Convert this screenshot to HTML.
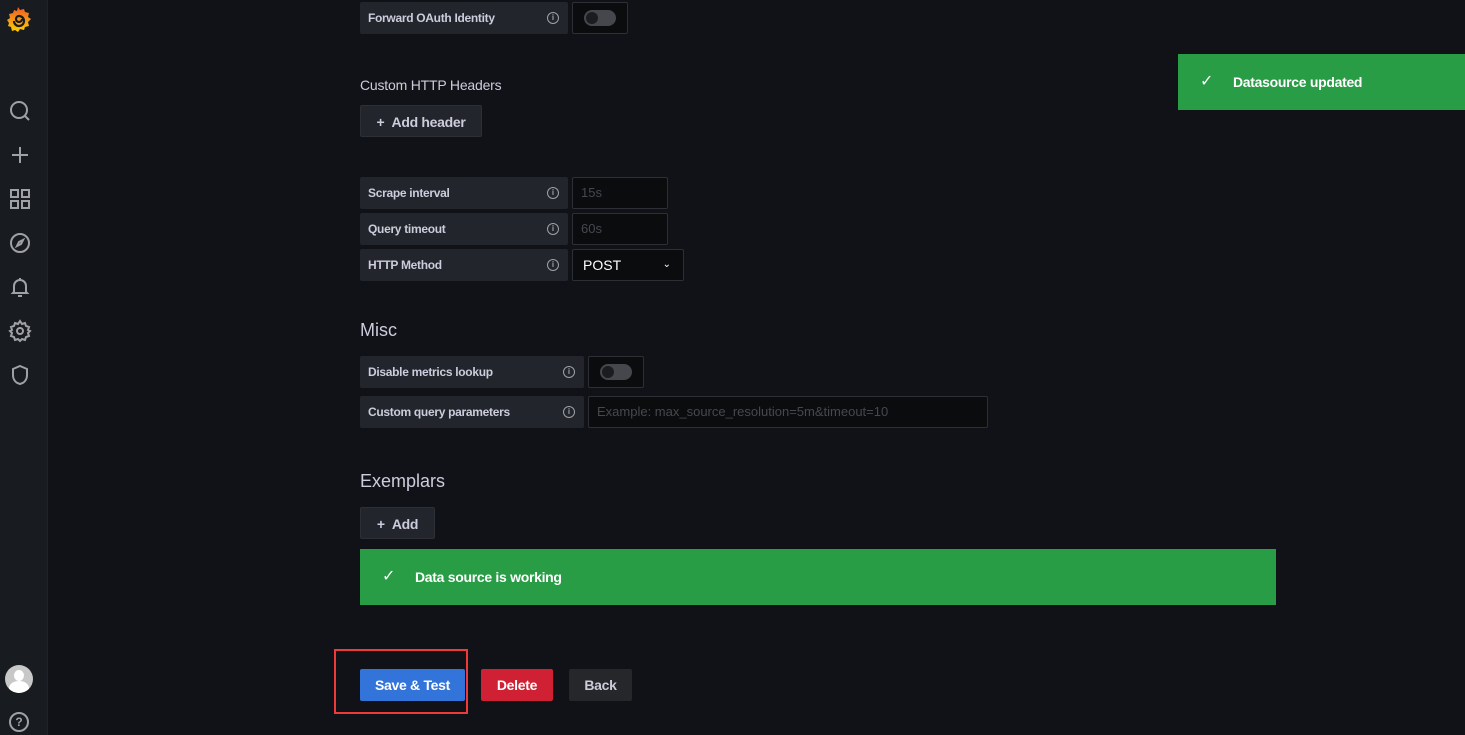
<!DOCTYPE html>
<html><head><meta charset="utf-8"><style>
*{box-sizing:border-box;margin:0;padding:0}
body{width:1465px;height:735px;background:#111217;font-family:"Liberation Sans",sans-serif;color:#ccccdc;position:relative;overflow:hidden}
.side{position:absolute;left:0;top:0;width:48px;height:735px;background:#181b1f;border-right:1px solid #202226}
.side svg{position:absolute;left:8px}
.a{position:absolute}
.lbl{position:absolute;background:#22252b;border-radius:2px;height:32px;font-size:12px;font-weight:bold;color:#ccccdc;line-height:32px;padding-left:8px;letter-spacing:-0.3px}
.lbl i{position:absolute;right:9px;top:10px;width:12px;height:12px;border:1.3px solid #9fa1a6;border-radius:50%;font-style:normal;font-size:8px;line-height:9px;text-align:center;color:#9fa1a6;letter-spacing:0}
.inp{position:absolute;background:#0b0c0e;border:1px solid #2c2f35;border-radius:2px;height:32px;font-size:13px;line-height:30px;padding-left:8px;color:#464850}
.tog{position:absolute;width:32px;height:16px;border-radius:8px;background:#45474d}
.tog:after{content:"";position:absolute;left:2px;top:2px;width:12px;height:12px;border-radius:50%;background:#1b1c20}
.btn{position:absolute;height:32px;border-radius:2px;font-size:14px;font-weight:bold;line-height:32px;text-align:center;color:#fff;letter-spacing:-0.3px}
.h{position:absolute;font-size:18px;color:#ccccdc}
.green{position:absolute;background:#299c46;color:#fff;font-weight:bold;font-size:14px;letter-spacing:-0.3px}
</style></head><body>
<div class="side">
<svg style="top:5px;left:6px" width="26" height="28" viewBox="0 0 26 28"><defs><linearGradient id="g" x1="0" y1="1" x2="0" y2="0"><stop offset="0" stop-color="#fcd000"/><stop offset="1" stop-color="#f05a28"/></linearGradient></defs><path d="M12 2l2 3 4-1 1 3 4 1-1 4 3 2-3 3 1 4-4 1-1 3-4-1-2 3-3-2-3 1-1-4-3-1 1-3-2-3 3-2-1-4 4-1 1-3 3 1z" fill="url(#g)"/><path d="M16 14a3 3 0 11-3-3 5 5 0 11-5 5" fill="none" stroke="#181b1f" stroke-width="2.2"/></svg>
<svg style="top:99px" width="24" height="24" viewBox="0 0 24 24" fill="none" stroke="#9fa1a6" stroke-width="2"><circle cx="11" cy="11" r="8"/><path d="M17 17l4 4"/></svg>
<svg style="top:143px" width="24" height="24" viewBox="0 0 24 24" stroke="#9fa1a6" stroke-width="2"><path d="M12 4v16M4 12h16"/></svg>
<svg style="top:187px" width="24" height="24" viewBox="0 0 24 24" fill="none" stroke="#9fa1a6" stroke-width="2"><rect x="3" y="3" width="7" height="7"/><rect x="14" y="3" width="7" height="7"/><rect x="3" y="14" width="7" height="7"/><rect x="14" y="14" width="7" height="7"/></svg>
<svg style="top:231px" width="24" height="24" viewBox="0 0 24 24" fill="none" stroke="#9fa1a6" stroke-width="2"><circle cx="12" cy="12" r="9"/><path d="M15 9l-2 4-4 2 2-4z"/></svg>
<svg style="top:275px" width="24" height="24" viewBox="0 0 24 24" fill="none" stroke="#9fa1a6" stroke-width="2"><path d="M6 17V11a6 6 0 0112 0v6l1 1H5zM10 21h4M12 3v2"/></svg>
<svg style="top:319px" width="24" height="24" viewBox="0 0 24 24" fill="none" stroke="#9fa1a6" stroke-width="2"><circle cx="12" cy="12" r="3"/><path d="M12 2l2 3 3-1 1 3 3 1-1 3 2 1-2 2 1 3-3 1-1 3-3-1-2 2-2-2-3 1-1-3-3-1 1-3-2-2 2-1-1-3 3-1 1-3 3 1z"/></svg>
<svg style="top:363px" width="24" height="24" viewBox="0 0 24 24" fill="none" stroke="#9fa1a6" stroke-width="2"><path d="M12 3l7 3v6c0 5-3 8-7 9-4-1-7-4-7-9V6z"/></svg>
<div class="a" style="left:5px;top:665px;width:28px;height:28px;border-radius:50%;background:#c8c8c8;overflow:hidden"><div class="a" style="left:9px;top:5px;width:10px;height:11px;border-radius:50%;background:#fff"></div><div class="a" style="left:4px;top:16px;width:20px;height:14px;border-radius:50% 50% 0 0;background:#fff"></div></div>
<div class="a" style="left:9px;top:712px;width:20px;height:20px;border:2px solid #9fa1a6;border-radius:50%;font-size:12px;font-weight:bold;text-align:center;line-height:16px;color:#9fa1a6">?</div>
</div>

<div class="lbl" style="left:360px;top:2px;width:208px">Forward OAuth Identity<i>i</i></div>
<div class="inp" style="left:572px;top:2px;width:56px"></div><div class="tog" style="left:584px;top:10px"></div>

<div class="a" style="left:360px;top:77px;font-size:14px;letter-spacing:-0.2px">Custom HTTP Headers</div>
<div class="btn" style="left:360px;top:105px;width:122px;background:#22252b;color:#ccccdc;border:1px solid #2c2f35">+&nbsp;&nbsp;Add header</div>

<div class="lbl" style="left:360px;top:177px;width:208px">Scrape interval<i>i</i></div>
<div class="inp" style="left:572px;top:177px;width:96px">15s</div>
<div class="lbl" style="left:360px;top:213px;width:208px">Query timeout<i>i</i></div>
<div class="inp" style="left:572px;top:213px;width:96px">60s</div>
<div class="lbl" style="left:360px;top:249px;width:208px">HTTP Method<i>i</i></div>
<div class="inp" style="left:572px;top:249px;width:112px;color:#fff;font-size:14px;padding-left:10px">POST<span style="position:absolute;right:12px;font-size:10px">&#8964;</span></div>

<div class="h" style="left:360px;top:320px">Misc</div>
<div class="lbl" style="left:360px;top:356px;width:224px">Disable metrics lookup<i>i</i></div>
<div class="inp" style="left:588px;top:356px;width:56px"></div><div class="tog" style="left:600px;top:364px"></div>
<div class="lbl" style="left:360px;top:396px;width:224px">Custom query parameters<i>i</i></div>
<div class="inp" style="left:588px;top:396px;width:400px">Example: max_source_resolution=5m&amp;timeout=10</div>

<div class="h" style="left:360px;top:471px">Exemplars</div>
<div class="btn" style="left:360px;top:507px;width:75px;background:#22252b;color:#ccccdc;border:1px solid #2c2f35">+&nbsp;&nbsp;Add</div>

<div class="green" style="left:360px;top:549px;width:916px;height:56px;line-height:56px;padding-left:55px"><span style="position:absolute;left:22px;font-size:16px;font-weight:normal">&#10003;</span>Data source is working</div>
<div class="green" style="left:1178px;top:54px;width:287px;height:56px;line-height:56px;padding-left:55px"><span style="position:absolute;left:22px;font-size:16px;font-weight:normal">&#10003;</span>Datasource updated</div>

<div class="a" style="left:334px;top:649px;width:134px;height:65px;border:2px solid #f03a3a"></div>
<div class="btn" style="left:360px;top:669px;width:105px;background:#3274d9">Save &amp; Test</div>
<div class="btn" style="left:481px;top:669px;width:72px;background:#d02033">Delete</div>
<div class="btn" style="left:569px;top:669px;width:63px;background:#25272b;color:#ccccdc">Back</div>
</body></html>
